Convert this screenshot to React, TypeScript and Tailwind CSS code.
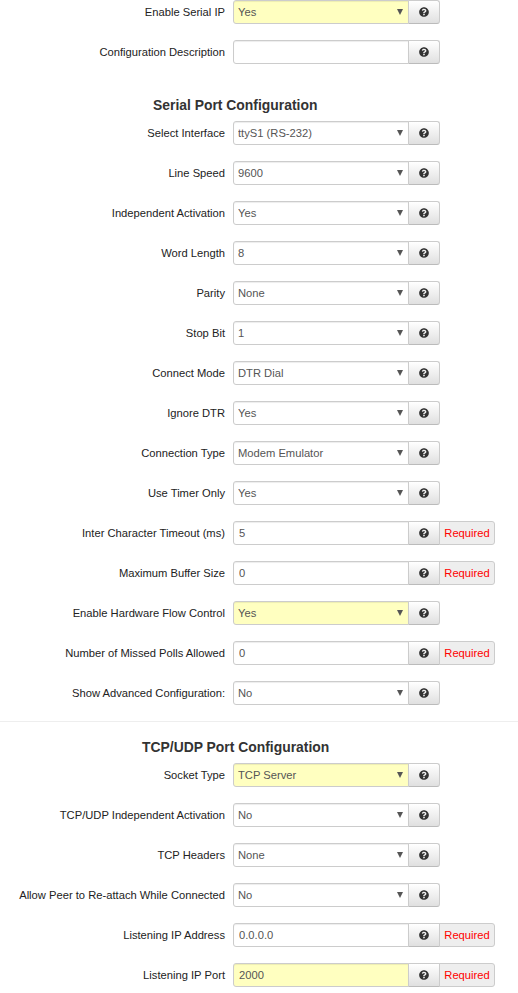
import React from 'react';
import { FaQuestionCircle } from 'react-icons/fa';

type Field = {
  label: string;
  value: string;
  input?: boolean;
  changed?: boolean;
  required?: boolean;
};

const topFields: Field[] = [
  { label: 'Enable Serial IP', value: 'Yes', changed: true },
  { label: 'Configuration Description', value: '', input: true },
];

const serialFields: Field[] = [
  { label: 'Select Interface', value: 'ttyS1 (RS-232)' },
  { label: 'Line Speed', value: '9600' },
  { label: 'Independent Activation', value: 'Yes' },
  { label: 'Word Length', value: '8' },
  { label: 'Parity', value: 'None' },
  { label: 'Stop Bit', value: '1' },
  { label: 'Connect Mode', value: 'DTR Dial' },
  { label: 'Ignore DTR', value: 'Yes' },
  { label: 'Connection Type', value: 'Modem Emulator' },
  { label: 'Use Timer Only', value: 'Yes' },
  { label: 'Inter Character Timeout (ms)', value: '5', input: true, required: true },
  { label: 'Maximum Buffer Size', value: '0', input: true, required: true },
  { label: 'Enable Hardware Flow Control', value: 'Yes', changed: true },
  { label: 'Number of Missed Polls Allowed', value: '0', input: true, required: true },
  { label: 'Show Advanced Configuration:', value: 'No' },
];

const tcpFields: Field[] = [
  { label: 'Socket Type', value: 'TCP Server', changed: true },
  { label: 'TCP/UDP Independent Activation', value: 'No' },
  { label: 'TCP Headers', value: 'None' },
  { label: 'Allow Peer to Re-attach While Connected', value: 'No' },
  { label: 'Listening IP Address', value: '0.0.0.0', input: true, required: true },
  { label: 'Listening IP Port', value: '2000', input: true, changed: true, required: true },
];

function Row({ field }: { field: Field }) {
  const bg = field.changed ? 'bg-[#ffffc0]' : 'bg-white';
  return (
    <div className="flex items-center h-6 mb-4">
      <label className="w-[225px] shrink-0 text-right text-[#222]">{field.label}</label>
      <div className="flex ml-2 h-6">
        <div className="relative w-[176px]">
          {field.input ? (
            <input
              readOnly
              value={field.value}
              className={`w-full h-6 px-[5px] border border-[#ccc] rounded-l-[3px] text-[#555] outline-none shadow-[inset_0_1px_1px_rgba(0,0,0,0.075)] ${bg}`}
            />
          ) : (
            <>
              <select
                value={field.value}
                onChange={() => {}}
                className={`w-full h-6 pl-[4px] border border-[#ccc] rounded-l-[3px] text-[#555] appearance-none outline-none shadow-[inset_0_1px_1px_rgba(0,0,0,0.075)] ${bg}`}
              >
                <option>{field.value}</option>
              </select>
              <span className="absolute right-[6px] top-[9px] w-0 h-0 border-x-[3.5px] border-x-transparent border-t-[6px] border-t-[#555]" />
            </>
          )}
        </div>
        <button
          className={`w-[32px] h-6 -ml-px flex items-center justify-center border border-[#ccc] border-b-[#bbb] bg-gradient-to-b from-white to-[#e0e0e0] ${
            field.required ? '' : 'rounded-r-[3px]'
          }`}
        >
          <FaQuestionCircle className="w-[10px] h-[10px] text-[#333]" />
        </button>
        {field.required && (
          <span className="w-[56px] h-6 -ml-px flex items-center justify-center border border-[#ccc] rounded-r-[3px] bg-[#eee] text-[#ff0000]">
            Required
          </span>
        )}
      </div>
    </div>
  );
}

export default function App() {
  return (
    <div className="w-[518px] h-[993px] overflow-hidden bg-white text-[11.2px] font-['Liberation_Sans',Arial,sans-serif]">
      {topFields.map((f) => (
        <Row key={f.label} field={f} />
      ))}
      <h4 className="mt-[32px] mb-[7px] h-[18px] pl-[153px] text-[13.9px] leading-[18px] font-bold text-[#333]">
        Serial Port Configuration
      </h4>
      {serialFields.map((f) => (
        <Row key={f.label} field={f} />
      ))}
      <hr className="border-0 border-t border-[#eee]" />
      <h4 className="mt-[16px] mb-[7px] h-[18px] pl-[142px] text-[13.9px] leading-[18px] font-bold text-[#333]">
        TCP/UDP Port Configuration
      </h4>
      {tcpFields.map((f) => (
        <Row key={f.label} field={f} />
      ))}
    </div>
  );
}
